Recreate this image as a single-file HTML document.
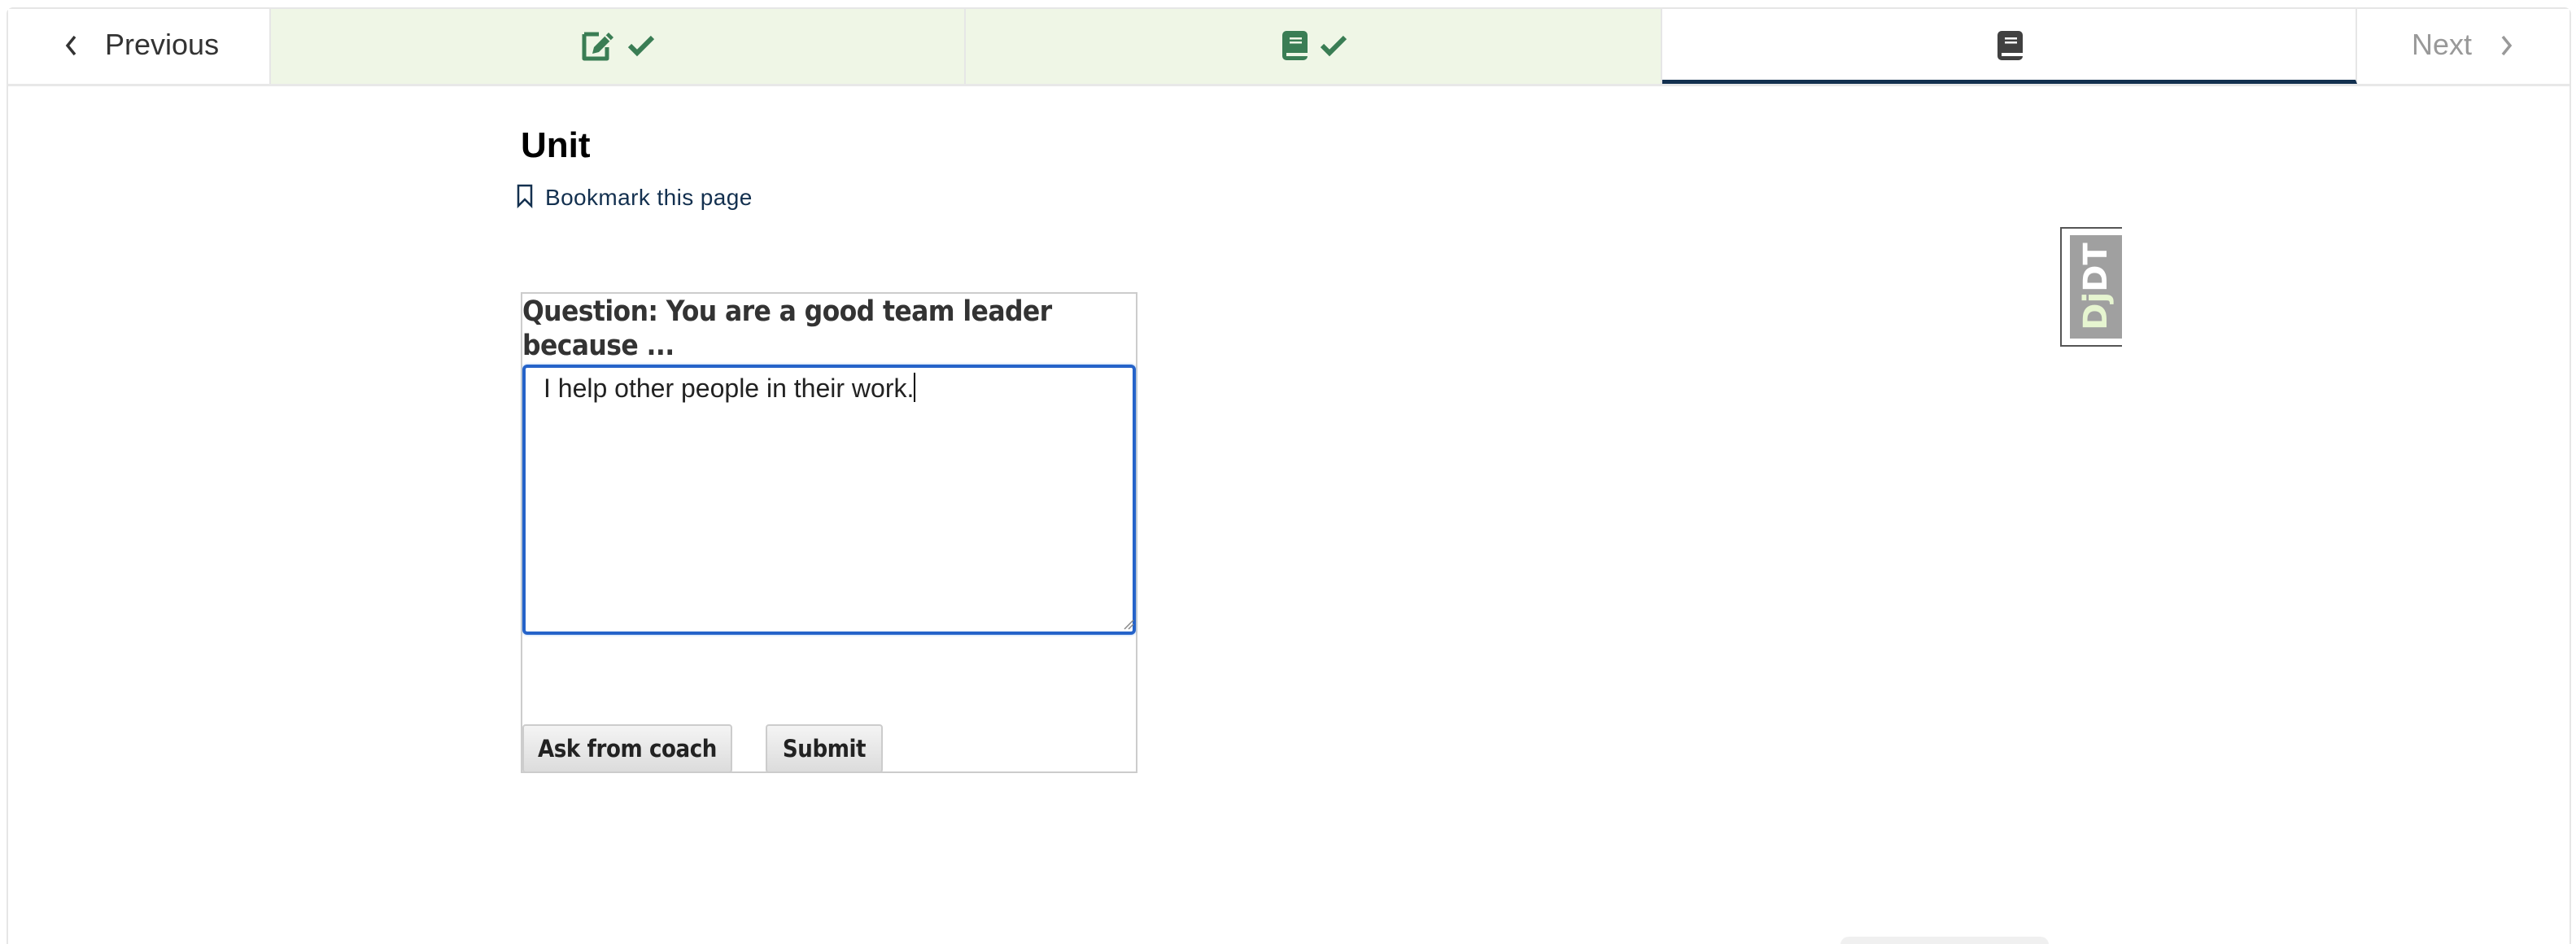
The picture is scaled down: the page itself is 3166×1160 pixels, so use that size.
<!DOCTYPE html>
<html><head><meta charset="utf-8"><style>
html,body{margin:0;padding:0;width:3166px;height:1160px;background:#fff;overflow:hidden;font-family:"Liberation Sans",sans-serif}
.wrap{position:relative;width:3166px;height:1160px;overflow:hidden}
.frame{position:absolute;left:8px;top:9px;width:3152px;height:1200px;border:2px solid #e6e6e6;border-radius:8px;box-sizing:border-box}
.nav{position:absolute;left:10px;top:11px;width:3148px;height:92px;border-bottom:3px solid #e8e8e8}
.cell{position:absolute;top:0;height:92px;box-sizing:border-box;border-right:2px solid #e6e6e6}
.g{background:#eff6e6}
.abs{position:absolute}
</style></head><body><div class="wrap">
<div class="frame"></div>
<div class="nav">
 <div class="cell" style="left:0;width:323px;background:#fff"></div>
 <div class="cell g" style="left:323px;width:854px"></div>
 <div class="cell g" style="left:1177px;width:856px"></div>
 <div class="cell" style="left:2033px;width:854px;background:#fff;border-bottom:5px solid #13304f"></div>
 <div class="cell" style="left:2887px;width:261px;background:#fff;border-right:none"></div>
</div>
<svg class="abs" style="left:78px;top:42px" width="20" height="30" viewBox="0 0 20 30"><path d="M14 3 L5 14 L14 25" fill="none" stroke="#333" stroke-width="3.5"/></svg>
<div class="abs" style="left:129px;top:34px;font-size:36px;color:#333">Previous</div>
<svg class="abs" style="left:714px;top:36px" width="44" height="40" viewBox="0 0 44 40"><path d="M4 6 H22 M4 6 V36 H32 V22" fill="none" stroke="#3a7d54" stroke-width="5" stroke-linejoin="round"/><path d="M14 30 L16 22 L34 4 L40 10 L22 28 Z" fill="#3a7d54"/><path d="M30 8 L36 14" stroke="#eff6e6" stroke-width="2"/></svg>
<svg class="abs" style="left:770px;top:42px" width="36" height="28" viewBox="0 0 36 28"><path d="M4 14 L13 23 L32 4" fill="none" stroke="#3a7d54" stroke-width="6"/></svg>
<svg class="abs" style="left:1576px;top:38px" width="32" height="36" viewBox="0 0 32 36"><rect x="0" y="0" width="31" height="36" rx="5" fill="#3a7d54"/><rect x="9" y="8" width="15" height="2.5" fill="#eff6e6"/><rect x="9" y="13" width="15" height="2.5" fill="#eff6e6"/><rect x="5" y="27" width="26" height="4" fill="#eff6e6"/></svg>
<svg class="abs" style="left:1621px;top:42px" width="36" height="28" viewBox="0 0 36 28"><path d="M4 14 L13 23 L32 4" fill="none" stroke="#3a7d54" stroke-width="6"/></svg>
<svg class="abs" style="left:2455px;top:38px" width="32" height="36" viewBox="0 0 32 36"><rect x="0" y="0" width="31" height="36" rx="5" fill="#404040"/><rect x="9" y="8" width="15" height="2.5" fill="#fff"/><rect x="9" y="13" width="15" height="2.5" fill="#fff"/><rect x="5" y="27" width="26" height="4" fill="#fff"/></svg>
<div class="abs" style="left:2964px;top:34px;font-size:36px;color:#999">Next</div>
<svg class="abs" style="left:3070px;top:42px" width="20" height="30" viewBox="0 0 20 30"><path d="M6 3 L15 14 L6 25" fill="none" stroke="#999" stroke-width="3.5"/></svg>

<div class="abs" style="left:640px;top:154px;font-size:44px;font-weight:bold;color:#000">Unit</div>
<svg class="abs" style="left:634px;top:226px" width="22" height="30" viewBox="0 0 22 30"><path d="M3 2 H19 V27 L11 19 L3 27 Z" fill="none" stroke="#13304f" stroke-width="2.5"/></svg>
<div class="abs" style="left:670px;top:227px;font-size:28px;color:#13304f;letter-spacing:0.4px">Bookmark this page</div>

<div class="abs" style="left:640px;top:359px;width:758px;height:591px;border:2px solid #ccc;box-sizing:border-box"></div>
<div class="abs" style="left:642px;top:362px;width:740px;font-size:35px;line-height:42px;font-weight:bold;color:#333;letter-spacing:-0.6px;font-family:'DejaVu Sans Condensed','Liberation Sans',sans-serif">Question: You are a good team leader because ...</div>
<div class="abs" style="left:642px;top:448px;width:754px;height:332px;border:4px solid #2563c9;border-radius:6px;box-sizing:border-box;box-shadow:0 0 3px #9bc0f0"></div>
<div class="abs" style="left:668px;top:458px;font-size:32px;color:#222">I help other people in their work.<span style="display:inline-block;width:2px;height:36px;background:#000;vertical-align:-6px"></span></div>
<svg class="abs" style="left:1380px;top:760px" width="14" height="14"><path d="M2 13 L13 2 M7 13 L13 7" stroke="#888" stroke-width="1.5"/></svg>
<div class="abs" style="left:642px;top:890px;width:258px;height:60px;border:2px solid #ccc;border-radius:4px;box-sizing:border-box;background:linear-gradient(#f4f4f4,#dcdcdc);font-size:29px;font-weight:bold;color:#222;text-align:center;line-height:56px;letter-spacing:-0.4px;font-family:'DejaVu Sans Condensed','Liberation Sans',sans-serif">Ask from coach</div>
<div class="abs" style="left:941px;top:890px;width:144px;height:60px;border:2px solid #ccc;border-radius:4px;box-sizing:border-box;background:linear-gradient(#f4f4f4,#dcdcdc);font-size:29px;font-weight:bold;color:#222;text-align:center;line-height:56px;letter-spacing:-0.4px;font-family:'DejaVu Sans Condensed','Liberation Sans',sans-serif">Submit</div>

<div class="abs" style="left:2532px;top:279px;width:76px;height:147px;border:2px solid #555;border-right:none;box-sizing:border-box;background:#fff"></div>
<div class="abs" style="left:2544px;top:289px;width:64px;height:127px;background:#a0a0a0"></div>
<div class="abs" style="left:2576px;top:352px;transform:translate(-50%,-50%) rotate(-90deg);font-size:40px;font-weight:bold;color:#fff;white-space:nowrap;font-family:'DejaVu Sans','Liberation Sans',sans-serif"><span style="color:#e6f5d0">Dj</span>DT</div>

<div class="abs" style="left:2262px;top:1151px;width:256px;height:20px;background:#f0f0f0;border-radius:10px"></div>
</div></body></html>
